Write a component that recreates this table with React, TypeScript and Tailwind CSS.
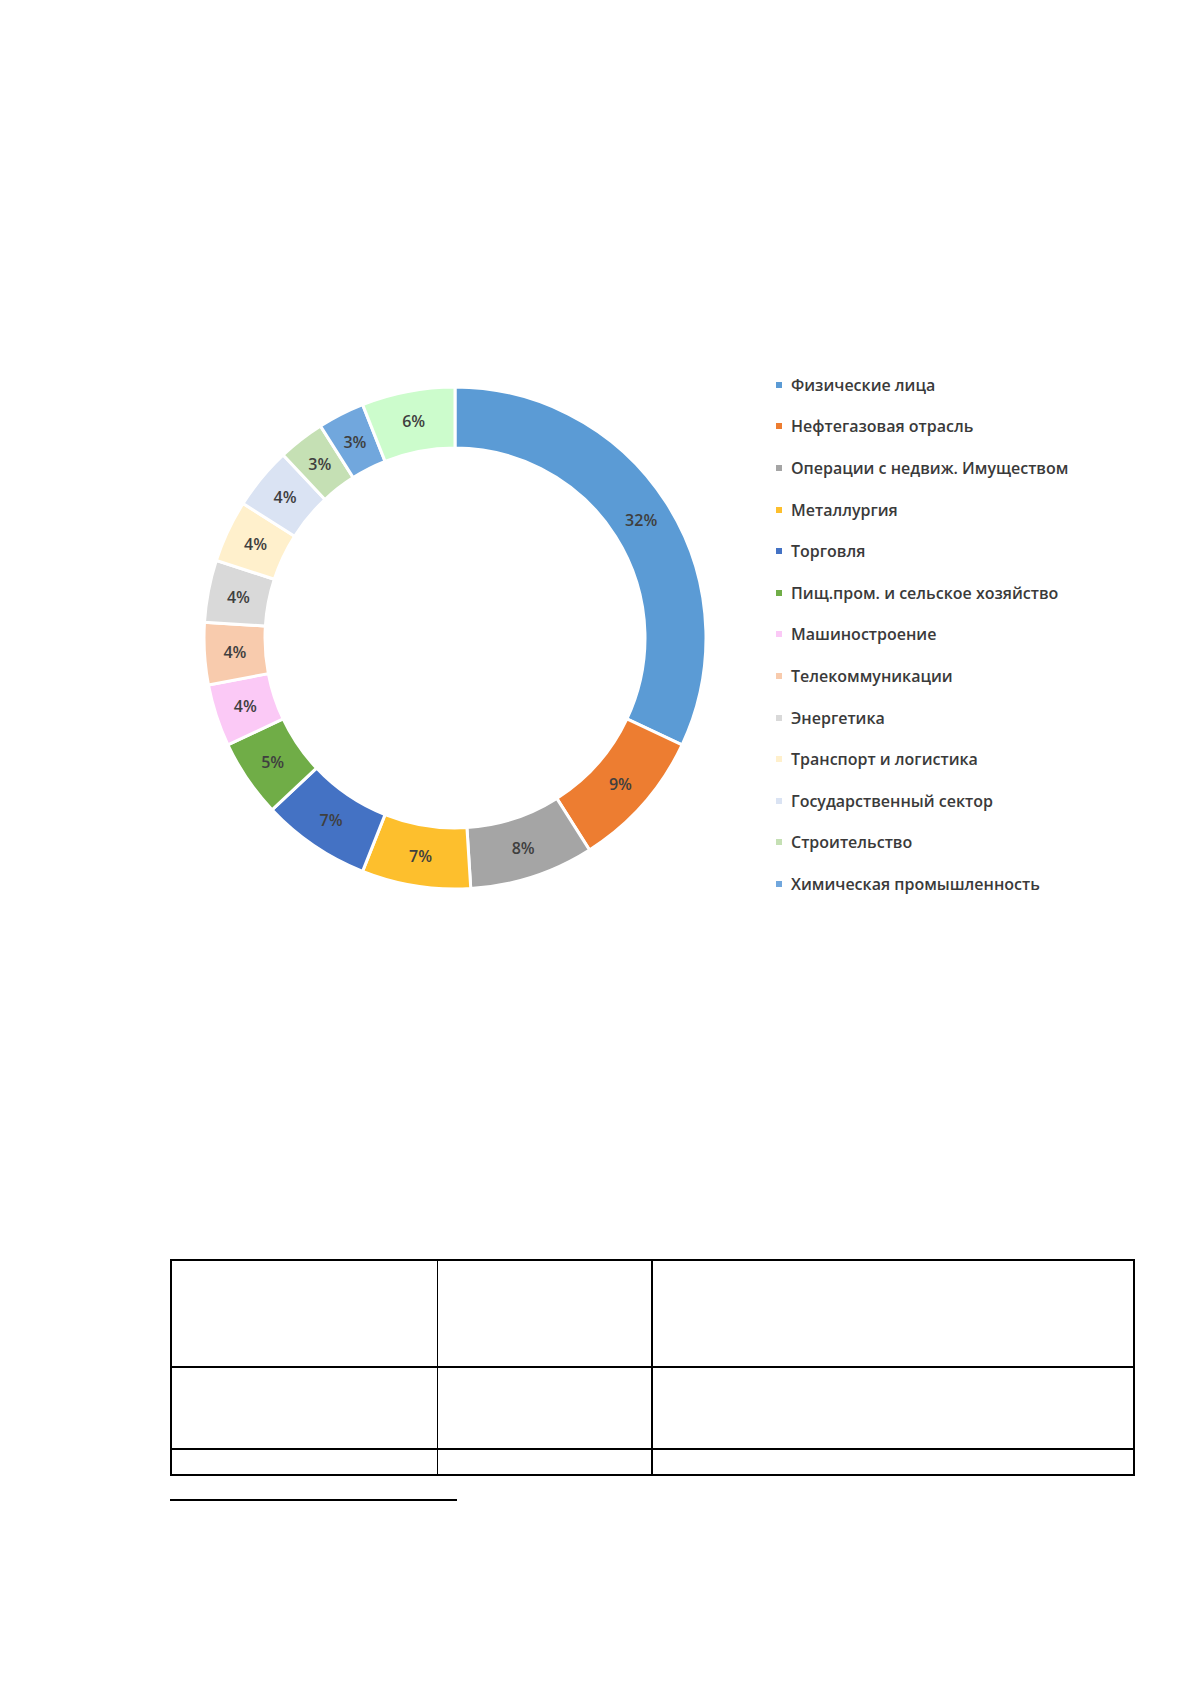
import React from 'react';

type Slice = { value: number; color: string; label?: string };

const slices: Slice[] = [
  { value: 32, color: '#5b9bd5', label: 'Физические лица' },
  { value: 9, color: '#ed7d31', label: 'Нефтегазовая отрасль' },
  { value: 8, color: '#a5a5a5', label: 'Операции с недвиж. Имуществом' },
  { value: 7, color: '#fdbf2d', label: 'Металлургия' },
  { value: 7, color: '#4472c4', label: 'Торговля' },
  { value: 5, color: '#70ad47', label: 'Пищ.пром. и сельское хозяйство' },
  { value: 4, color: '#fbc9f6', label: 'Машиностроение' },
  { value: 4, color: '#f8cbad', label: 'Телекоммуникации' },
  { value: 4, color: '#d9d9d9', label: 'Энергетика' },
  { value: 4, color: '#fff0cc', label: 'Транспорт и логистика' },
  { value: 4, color: '#dae3f3', label: 'Государственный сектор' },
  { value: 3, color: '#c5e0b4', label: 'Строительство' },
  { value: 3, color: '#71a7dd', label: 'Химическая промышленность' },
  { value: 6, color: '#ccfccc' },
];

const CX = 260;
const CY = 260;
const R = 251;
const r = 190;

function point(rad: number, deg: number) {
  const a = ((deg - 90) * Math.PI) / 180;
  return [CX + rad * Math.cos(a), CY + rad * Math.sin(a)];
}

function arcPath(start: number, end: number) {
  const large = end - start > 180 ? 1 : 0;
  const [x1, y1] = point(R, start);
  const [x2, y2] = point(R, end);
  const [x3, y3] = point(r, end);
  const [x4, y4] = point(r, start);
  return `M ${x1} ${y1} A ${R} ${R} 0 ${large} 1 ${x2} ${y2} L ${x3} ${y3} A ${r} ${r} 0 ${large} 0 ${x4} ${y4} Z`;
}

function Donut() {
  let acc = 0;
  return (
    <svg width={520} height={520} viewBox="0 0 520 520" className="shrink-0 mt-[14px]">
      {slices.map((s, i) => {
        const start = (acc / 100) * 360;
        acc += s.value;
        const end = (acc / 100) * 360;
        const [lx, ly] = point((R + r) / 2, (start + end) / 2);
        return (
          <g key={i}>
            <path d={arcPath(start, end)} fill={s.color} stroke="#ffffff" strokeWidth={3} />
            <text
              x={lx}
              y={ly}
              textAnchor="middle"
              dominantBaseline="central"
              fontSize={16}
              fill="#3f3f3f"
              style={{ fontFamily: '"Open Sans", sans-serif', fontWeight: 600 }}
            >
              {s.value}%
            </text>
          </g>
        );
      })}
    </svg>
  );
}

export default function App() {
  return (
    <div className="w-[1191px] h-[1684px] bg-white overflow-hidden font-['Open_Sans',sans-serif]">
      {/* Chart + legend */}
      <div className="flex items-start h-[541px] mt-[364px] ml-[195px]">
        <Donut />
        <ul className="ml-[61px] flex flex-col">
          {slices
            .filter((s) => s.label)
            .map((s) => (
              <li key={s.label} className="h-[41.6px] flex items-center text-[16px] font-semibold text-[#3a3a3a]">
                <span className="w-[6px] h-[6px] mr-[9px]" style={{ backgroundColor: s.color }} />
                {s.label}
              </li>
            ))}
        </ul>
      </div>

      {/* Empty table */}
      <div className="ml-[170px] mt-[354px] w-[965px] border-2 border-black flex flex-col">
        {[105, 80, 24].map((h, i) => (
          <div key={i} className={i < 2 ? 'flex border-b-2 border-black' : 'flex'} style={{ height: h + (i < 2 ? 2 : 0) }}>
            <div className="w-[266px] border-r border-black" />
            <div className="w-[215px] border-r-2 border-black" />
            <div className="flex-1" />
          </div>
        ))}
      </div>

      {/* Footnote rule */}
      <div className="ml-[170px] mt-[23px] w-[287px] h-[2px] bg-black" />
    </div>
  );
}
